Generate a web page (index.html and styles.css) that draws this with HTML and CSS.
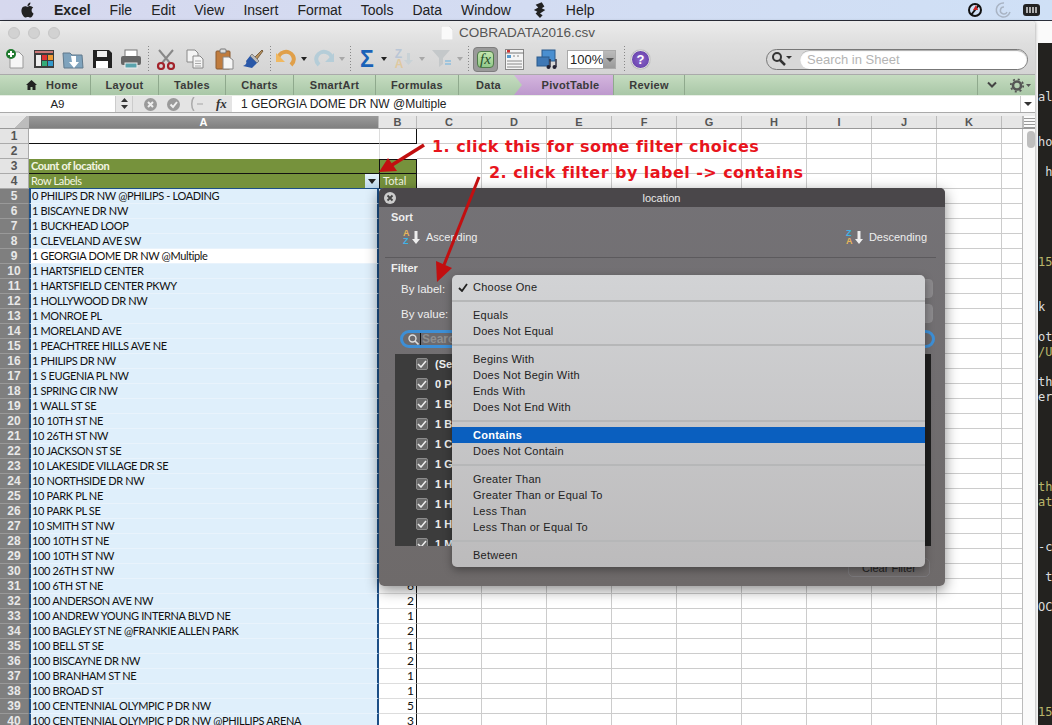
FILE: index.html
```html
<!DOCTYPE html>
<html>
<head>
	<meta charset="utf-8"/>
	<title>COBRADATA2016.csv</title>
	<link rel="stylesheet" href="styles.css">
</head>
<body>
	<div class="menubar">
		<svg class="apple" viewBox="0 0 24 24"><path d="M12.152 6.896c-.948 0-2.415-1.078-3.96-1.04-2.04.027-3.91 1.183-4.961 3.014-2.117 3.675-.546 9.103 1.519 12.09 1.013 1.454 2.208 3.09 3.792 3.039 1.52-.065 2.09-.987 3.935-.987 1.831 0 2.35.987 3.96.948 1.637-.026 2.676-1.48 3.676-2.948 1.156-1.688 1.636-3.325 1.662-3.415-.039-.013-3.182-1.221-3.22-4.857-.026-3.04 2.48-4.494 2.597-4.559-1.429-2.09-3.623-2.324-4.39-2.376-2-.156-3.675 1.09-4.61 1.09zM15.53 3.83c.843-1.012 1.4-2.427 1.245-3.83-1.207.052-2.662.805-3.532 1.818-.78.896-1.454 2.338-1.273 3.714 1.338.104 2.715-.688 3.559-1.701"/></svg>
		<b>Excel</b><span>File</span><span>Edit</span><span>View</span><span>Insert</span><span>Format</span><span>Tools</span><span>Data</span><span>Window</span>
		<svg class="scripts" viewBox="0 0 16 18"><path d="M10 0 3 3l3 3-5 3 4 2-2 2 5 5 3-3-3-2 6-4-4-2 3-2z" fill="#222"/></svg>
		<span>Help</span>
		<div class="status">
			<svg width="16" height="16" viewBox="0 0 16 16"><circle cx="8" cy="8" r="6" fill="none" stroke="#111" stroke-width="2"/><path d="M4 13 12 3" stroke="#111" stroke-width="2"/><path d="M9 3 11 8 6 8z" fill="#c22"/></svg>
			<svg width="18" height="18" viewBox="0 0 18 18" fill="none" stroke="#a9b4c4" stroke-width="1.5"><path d="M10 2a7 7 0 1 0 6 9"/><path d="M10 6a3.5 3.5 0 1 0 3 5"/></svg>
			<svg width="18" height="12" viewBox="0 0 18 12"><rect width="17" height="12" rx="3" fill="#222"/><path d="M4 3v6M7 3v6M10 3v6M13 3v6" stroke="#ddd" stroke-width="1.5"/></svg>
		</div>
	</div>

	<div class="desk">
		<div class="window">
			<div class="titlebar">
				<div class="lights"><i></i><i></i><i></i></div>
				<svg width="12" height="14" viewBox="0 0 12 14"><path d="M0 0h8l4 4v10H0z" fill="#fafafa" stroke="#ddd"/></svg>
				<span class="doctitle">COBRADATA2016.csv</span>
			</div>

			<div class="toolbar">
				<div class="slot"><svg width="22" height="22" viewBox="0 0 22 22"><path d="M6 4h9l4 4v12H6z" fill="#f6f6f6" stroke="#999"/><circle cx="7" cy="6" r="5" fill="#1f7a2e"/><path d="M4 6h6M7 3v6" stroke="#fff" stroke-width="2"/></svg></div>
				<div class="slot"><svg width="22" height="22" viewBox="0 0 22 22"><rect x="1" y="2" width="20" height="18" fill="#3c3c3c"/><rect x="2" y="3" width="18" height="2" fill="#c77"/><rect x="9" y="7" width="5" height="5" fill="#d33"/><rect x="15" y="7" width="5" height="5" fill="#e93"/><rect x="9" y="13" width="5" height="5" fill="#3a7"/><rect x="15" y="13" width="5" height="5" fill="#39c"/><rect x="3" y="7" width="5" height="11" fill="#eee"/></svg></div>
				<div class="slot"><svg width="22" height="22" viewBox="0 0 22 22"><path d="M1 5h7l2 2h10l1 13H2z" fill="#7fa3bd" stroke="#60798c"/><path d="M9 8h5v6h3l-5 6-5-6h3z" fill="#fff"/></svg></div>
				<div class="slot"><svg width="22" height="22" viewBox="0 0 22 22"><path d="M2 2h16l3 3v15H2z" fill="#222"/><rect x="6" y="3" width="10" height="6" fill="#eee"/><rect x="5" y="13" width="12" height="7" fill="#fff"/></svg></div>
				<div class="slot"><svg width="22" height="22" viewBox="0 0 22 22"><rect x="5" y="2" width="12" height="7" fill="#fff" stroke="#777"/><rect x="1" y="8" width="20" height="9" rx="2" fill="#666"/><rect x="5" y="15" width="12" height="5" fill="#5aa3ad" stroke="#eee"/></svg></div>
				<i class="sep"></i>
				<div class="slot"><svg width="22" height="22" viewBox="0 0 22 22" fill="none"><path d="M4 2 15 15M18 2 7 15" stroke="#888" stroke-width="2"/><circle cx="6" cy="18" r="3" stroke="#a3232b" stroke-width="2.2"/><circle cx="16" cy="18" r="3" stroke="#a3232b" stroke-width="2.2"/></svg></div>
				<div class="slot"><svg width="22" height="22" viewBox="0 0 22 22" fill="#f4f4f4" stroke="#888"><path d="M3 2h8l3 3v9H3z"/><path d="M9 8h7l3 3v9H9z"/><path d="M11 13h6M11 15.5h6M11 18h6" stroke="#aaa"/></svg></div>
				<div class="slot"><svg width="22" height="22" viewBox="0 0 22 22"><rect x="3" y="3" width="14" height="18" rx="1" fill="#c07c3e" stroke="#8a5a30"/><rect x="7" y="1" width="6" height="4" rx="1" fill="#ddd" stroke="#777"/><path d="M10 9h6l4 3v9H10z" fill="#f6f6f6" stroke="#888"/></svg></div>
				<div class="slot"><svg width="22" height="22" viewBox="0 0 22 22"><path d="M13 9 20 2l1 1-6 8z" fill="#b9935f" stroke="#7a6040"/><path d="M10 6l7 7-2 2-7-7z" fill="#bbb" stroke="#888"/><path d="M8 8l7 7-5 5-9-2c3-1 4-3 3-5z" fill="#2a58a8"/></svg></div>
				<i class="sep"></i>
				<div class="slot-s"><svg width="22" height="20" viewBox="0 0 22 20" fill="none"><path d="M3 11A8 8 0 0 1 18 7c2 4 0 7-2 9" stroke="#e0a04a" stroke-width="4"/><path d="M1 4v9h9z" fill="#f0b860"/></svg></div>
				<div class="drop"></div>
				<div class="slot-s gap-l"><svg width="22" height="20" viewBox="0 0 22 20" fill="none"><path d="M19 11A8 8 0 0 0 4 7c-2 4 0 7 2 9" stroke="#b5cdd8" stroke-width="4"/><path d="M21 4v9h-9z" fill="#b5cdd8"/></svg></div>
				<div class="drop fade"></div>
				<i class="sep"></i>
				<div class="slot-s sigma">Σ</div>
				<div class="drop"></div>
				<div class="slot-s gap-l sortaz">
					<div class="azstack"><span>Z</span><span class="sa">A</span></div>
					<svg width="9" height="12" viewBox="0 0 9 12"><path d="M3 0h3v7h3l-4.500 5L0 7h3z" fill="#c9d2d6"/></svg>
				</div>
				<div class="drop fade"></div>
				<div class="slot-s gap-l"><svg width="22" height="20" viewBox="0 0 22 20"><path d="M1 1h18l-7 8v6l-4 3V9z" fill="#c4c8ca"/><path d="M14 12h6M14 15h6" stroke="#9fc4dc" stroke-width="2"/></svg></div>
				<div class="drop fade"></div>
				<i class="sep"></i>
				<div class="fxbtn"><span>fx</span></div>
				<div class="slot-t"><svg width="19" height="21" viewBox="0 0 19 21"><rect x=".5" y=".5" width="18" height="20" fill="#f5f5f5" stroke="#888"/><path d="M0 4h19" stroke="#777"/><rect x="2" y="1" width="3" height="2.5" fill="#c33"/><rect x="2" y="6" width="4" height="3" fill="#59c"/><path d="M8 7h2M12 7h2M2 12h15M2 15h15M2 18h15" stroke="#888"/></svg></div>
				<div class="slot-m"><svg width="21" height="21" viewBox="0 0 21 21"><rect x="6" y="1" width="13" height="11" fill="#4a8fd0" stroke="#2b5a8c"/><rect x="1" y="8" width="12" height="9" fill="#3f78b5" stroke="#2b5a8c"/><path d="M14 10v8M20 10v8" stroke="#334" stroke-width="1.5"/><circle cx="12.500" cy="18" r="2" fill="#223"/><circle cx="18.500" cy="18" r="2" fill="#223"/></svg></div>
				<div class="zoombox"><span>100%</span><em></em></div>
				<i class="sep sep-z"></i>
				<div class="help">?</div>
				<div class="search">
					<svg width="22" height="16" viewBox="0 0 22 16" fill="none"><circle cx="6" cy="6" r="4" stroke="#333" stroke-width="2"/><path d="M9 9l5 5" stroke="#333" stroke-width="2.500"/><path d="M15 5h6l-3 3z" fill="#333"/></svg>
					<div class="searchfield">Search in Sheet</div>
				</div>
			</div>

			<div class="tabs">
				<div class="tab t-home"><svg width="11" height="10" viewBox="0 0 11 10"><path d="M5.500 0 11 5H9.500v5H6.500V7h-2v3h-3V5H0z" fill="#222"/></svg>Home</div>
				<div class="tab t-layout">Layout</div>
				<div class="tab t-tables">Tables</div>
				<div class="tab t-charts">Charts</div>
				<div class="tab t-smart">SmartArt</div>
				<div class="tab t-formulas">Formulas</div>
				<div class="tab t-data">Data</div>
				<div class="tab t-pivot">PivotTable</div>
				<div class="tab t-review">Review</div>
				<div class="tabrest">
					<i class="tabsep"></i>
					<svg width="12" height="8" viewBox="0 0 12 8" fill="none"><path d="M2 1.500 6 5.500 10 1.500" stroke="#444" stroke-width="2"/></svg>
					<svg width="22" height="15" viewBox="0 0 22 15"><circle cx="8" cy="7.500" r="4" fill="none" stroke="#555" stroke-width="2.600"/><circle cx="8" cy="7.500" r="6.200" fill="none" stroke="#555" stroke-width="1.800" stroke-dasharray="2 2.870"/><path d="M17 6h5l-2.500 3z" fill="#555"/></svg>
				</div>
			</div>

			<div class="formulabar">
				<div class="namebox">A9</div>
				<div class="stepper"><svg width="7" height="11" viewBox="0 0 7 11"><path d="M3.500 0 7 4H0zM3.500 11 0 7h7z" fill="#333"/></svg></div>
				<div class="fbtns">
					<svg width="13" height="13" viewBox="0 0 13 13"><circle cx="6.500" cy="6.500" r="6.500" fill="#9a9a9a"/><path d="M4 4l5 5M9 4l-5 5" stroke="#eee" stroke-width="2"/></svg>
					<svg width="13" height="13" viewBox="0 0 13 13"><circle cx="6.500" cy="6.500" r="6.500" fill="#9a9a9a"/><path d="M3.500 6.500 6 9l4-5" stroke="#eee" stroke-width="2" fill="none"/></svg>
					<svg width="16" height="14" viewBox="0 0 16 14" fill="none"><path d="M4 0C1 3 1 11 4 14" stroke="#aaa" stroke-width="1.500"/><path d="M7 7h6" stroke="#bbb" stroke-width="1.500"/></svg>
					<span class="fxlabel">fx</span>
				</div>
				<div class="forminput">1 GEORGIA DOME DR NW @Multiple</div>
				<div class="formdrop"></div>
			</div>

			<div class="headgap"></div>
			<div class="colhead">
				<div class="corner"></div>
				<div class="ch ch-a">A</div>
				<div class="ch ch-b">B</div>
				<div class="ch">C</div><div class="ch">D</div><div class="ch">E</div><div class="ch">F</div><div class="ch">G</div><div class="ch">H</div><div class="ch">I</div><div class="ch">J</div><div class="ch">K</div>
				<div class="ch ch-l"></div>
				<div class="splitter"></div>
			</div>

			<div class="sheet">
				<div class="rows">
					<div class="row"><span class="rh">1</span><span class="a plain lineb">&nbsp;</span><span class="b plain lineb liner"></span></div>
					<div class="row"><span class="rh">2</span><span class="a plain"></span><span class="b plain"></span></div>
					<div class="row"><span class="rh">3</span><span class="a pv pvb"><b>Count of location</b></span><span class="b pv pvb linet liner"></span></div>
					<div class="row"><span class="rh">4</span><span class="a pv pvlast">Row Labels<i class="fbtn"></i></span><span class="b pv pvl pvlast liner">Total</span></div>
					<div class="row first"><span class="rh sel">5</span><span class="a ac">0 PHILIPS DR NW @PHILIPS - LOADING</span><span class="b"></span></div>
					<div class="row"><span class="rh sel">6</span><span class="a ac">1 BISCAYNE DR NW</span><span class="b"></span></div>
					<div class="row"><span class="rh sel">7</span><span class="a ac">1 BUCKHEAD LOOP</span><span class="b"></span></div>
					<div class="row"><span class="rh sel">8</span><span class="a ac">1 CLEVELAND AVE SW</span><span class="b"></span></div>
					<div class="row"><span class="rh sel">9</span><span class="a ac active">1 GEORGIA DOME DR NW @Multiple</span><span class="b"></span></div>
					<div class="row"><span class="rh sel">10</span><span class="a ac">1 HARTSFIELD CENTER</span><span class="b"></span></div>
					<div class="row"><span class="rh sel">11</span><span class="a ac">1 HARTSFIELD CENTER PKWY</span><span class="b"></span></div>
					<div class="row"><span class="rh sel">12</span><span class="a ac">1 HOLLYWOOD DR NW</span><span class="b"></span></div>
					<div class="row"><span class="rh sel">13</span><span class="a ac">1 MONROE PL</span><span class="b"></span></div>
					<div class="row"><span class="rh sel">14</span><span class="a ac">1 MORELAND AVE</span><span class="b"></span></div>
					<div class="row"><span class="rh sel">15</span><span class="a ac">1 PEACHTREE HILLS AVE NE</span><span class="b"></span></div>
					<div class="row"><span class="rh sel">16</span><span class="a ac">1 PHILIPS DR NW</span><span class="b"></span></div>
					<div class="row"><span class="rh sel">17</span><span class="a ac">1 S EUGENIA PL NW</span><span class="b"></span></div>
					<div class="row"><span class="rh sel">18</span><span class="a ac">1 SPRING CIR NW</span><span class="b"></span></div>
					<div class="row"><span class="rh sel">19</span><span class="a ac">1 WALL ST SE</span><span class="b"></span></div>
					<div class="row"><span class="rh sel">20</span><span class="a ac">10 10TH ST NE</span><span class="b"></span></div>
					<div class="row"><span class="rh sel">21</span><span class="a ac">10 26TH ST NW</span><span class="b"></span></div>
					<div class="row"><span class="rh sel">22</span><span class="a ac">10 JACKSON ST SE</span><span class="b"></span></div>
					<div class="row"><span class="rh sel">23</span><span class="a ac">10 LAKESIDE VILLAGE DR SE</span><span class="b"></span></div>
					<div class="row"><span class="rh sel">24</span><span class="a ac">10 NORTHSIDE DR NW</span><span class="b"></span></div>
					<div class="row"><span class="rh sel">25</span><span class="a ac">10 PARK PL NE</span><span class="b"></span></div>
					<div class="row"><span class="rh sel">26</span><span class="a ac">10 PARK PL SE</span><span class="b"></span></div>
					<div class="row"><span class="rh sel">27</span><span class="a ac">10 SMITH ST NW</span><span class="b"></span></div>
					<div class="row"><span class="rh sel">28</span><span class="a ac">100 10TH ST NE</span><span class="b"></span></div>
					<div class="row"><span class="rh sel">29</span><span class="a ac">100 10TH ST NW</span><span class="b"></span></div>
					<div class="row"><span class="rh sel">30</span><span class="a ac">100 26TH ST NW</span><span class="b"></span></div>
					<div class="row"><span class="rh sel">31</span><span class="a ac">100 6TH ST NE</span><span class="b">6</span></div>
					<div class="row"><span class="rh sel">32</span><span class="a ac">100 ANDERSON AVE NW</span><span class="b">2</span></div>
					<div class="row"><span class="rh sel">33</span><span class="a ac">100 ANDREW YOUNG INTERNA BLVD NE</span><span class="b">1</span></div>
					<div class="row"><span class="rh sel">34</span><span class="a ac">100 BAGLEY ST NE @FRANKIE ALLEN PARK</span><span class="b">2</span></div>
					<div class="row"><span class="rh sel">35</span><span class="a ac">100 BELL ST SE</span><span class="b">1</span></div>
					<div class="row"><span class="rh sel">36</span><span class="a ac">100 BISCAYNE DR NW</span><span class="b">2</span></div>
					<div class="row"><span class="rh sel">37</span><span class="a ac">100 BRANHAM ST NE</span><span class="b">1</span></div>
					<div class="row"><span class="rh sel">38</span><span class="a ac">100 BROAD ST</span><span class="b">1</span></div>
					<div class="row"><span class="rh sel">39</span><span class="a ac">100 CENTENNIAL OLYMPIC P DR NW</span><span class="b">5</span></div>
					<div class="row"><span class="rh sel">40</span><span class="a ac">100 CENTENNIAL OLYMPIC P DR NW @PHILLIPS ARENA</span><span class="b">3</span></div>
				</div>
				<div class="gridrest"></div>
				<div class="vscroll"><div class="thumb"></div></div>
			</div>
		</div>

		<pre class="terminal">al


hou

 h





<em>15</em>


k

ot
<em>/U</em>

th
er





<em>th</em>
<em>at</em>


-c

 t

OC






<em>15</em></pre>

		<div class="dialog">
			<div class="dlg-head">
				<svg class="dlg-close" width="12" height="12" viewBox="0 0 12 12"><circle cx="6" cy="6" r="6" fill="#ccc"/><path d="M3.500 3.500l5 5M8.500 3.500l-5 5" stroke="#444" stroke-width="1.800"/></svg>
				location
			</div>
			<div class="dlg-title dlg-sort">Sort</div>
			<div class="sortrow">
				<div class="sortbtn">
					<span class="azicon"><b class="c-y">A</b><b class="c-b">Z</b></span><svg width="8" height="13" viewBox="0 0 8 13"><path d="M2.500 0h3v8H8l-4 5-4-5h2.500z" fill="#eee"/></svg>
					<span>Ascending</span>
				</div>
				<div class="sortbtn">
					<span class="azicon"><b class="c-b">Z</b><b class="c-y">A</b></span><svg width="8" height="13" viewBox="0 0 8 13"><path d="M2.500 0h3v8H8l-4 5-4-5h2.500z" fill="#eee"/></svg>
					<span>Descending</span>
				</div>
			</div>
			<div class="dlg-title dlg-filter">Filter</div>
			<div class="pickrow"><span>By label:</span><div class="picker"></div></div>
			<div class="pickrow"><span>By value:</span><div class="picker"></div></div>
			<div class="dlg-search">
				<svg width="11" height="11" viewBox="0 0 11 11" fill="none"><circle cx="4.500" cy="4.500" r="3.500" stroke="#ddd" stroke-width="1.400"/><path d="M7 7l3.500 3.500" stroke="#ddd" stroke-width="1.600"/></svg><i class="caret"></i>Search
			</div>
			<div class="checklist">
				<div class="chk"><i><svg width="10" height="8" viewBox="0 0 10 8"><path d="M1 4l3 3 5-6" stroke="#eee" stroke-width="1.500" fill="none"/></svg></i>(Select All)</div>
				<div class="chk"><i><svg width="10" height="8" viewBox="0 0 10 8"><path d="M1 4l3 3 5-6" stroke="#eee" stroke-width="1.500" fill="none"/></svg></i>0 PHILIPS DR NW</div>
				<div class="chk"><i><svg width="10" height="8" viewBox="0 0 10 8"><path d="M1 4l3 3 5-6" stroke="#eee" stroke-width="1.500" fill="none"/></svg></i>1 BISCAYNE DR NW</div>
				<div class="chk"><i><svg width="10" height="8" viewBox="0 0 10 8"><path d="M1 4l3 3 5-6" stroke="#eee" stroke-width="1.500" fill="none"/></svg></i>1 BUCKHEAD LOOP</div>
				<div class="chk"><i><svg width="10" height="8" viewBox="0 0 10 8"><path d="M1 4l3 3 5-6" stroke="#eee" stroke-width="1.500" fill="none"/></svg></i>1 CLEVELAND AVE</div>
				<div class="chk"><i><svg width="10" height="8" viewBox="0 0 10 8"><path d="M1 4l3 3 5-6" stroke="#eee" stroke-width="1.500" fill="none"/></svg></i>1 GEORGIA DOME</div>
				<div class="chk"><i><svg width="10" height="8" viewBox="0 0 10 8"><path d="M1 4l3 3 5-6" stroke="#eee" stroke-width="1.500" fill="none"/></svg></i>1 HARTSFIELD</div>
				<div class="chk"><i><svg width="10" height="8" viewBox="0 0 10 8"><path d="M1 4l3 3 5-6" stroke="#eee" stroke-width="1.500" fill="none"/></svg></i>1 HARTSFIELD</div>
				<div class="chk"><i><svg width="10" height="8" viewBox="0 0 10 8"><path d="M1 4l3 3 5-6" stroke="#eee" stroke-width="1.500" fill="none"/></svg></i>1 HOLLYWOOD</div>
				<div class="chk"><i><svg width="10" height="8" viewBox="0 0 10 8"><path d="M1 4l3 3 5-6" stroke="#eee" stroke-width="1.500" fill="none"/></svg></i>1 MONROE PL</div>
			</div>
			<div class="clearrow"><div class="clearbtn">Clear Filter</div></div>

			<div class="popup">
				<div class="item"><svg class="tick" width="10" height="9" viewBox="0 0 10 9"><path d="M1 5l3 3 5-7" stroke="#222" stroke-width="1.800" fill="none"/></svg>Choose One</div>
				<hr>
				<div class="item">Equals</div>
				<div class="item">Does Not Equal</div>
				<hr>
				<div class="item">Begins With</div>
				<div class="item">Does Not Begin With</div>
				<div class="item">Ends With</div>
				<div class="item">Does Not End With</div>
				<hr>
				<div class="item on">Contains</div>
				<div class="item">Does Not Contain</div>
				<hr>
				<div class="item">Greater Than</div>
				<div class="item">Greater Than or Equal To</div>
				<div class="item">Less Than</div>
				<div class="item">Less Than or Equal To</div>
				<hr>
				<div class="item">Between</div>
			</div>
		</div>

		<div class="note note1">1. click this for some filter choices</div>
		<div class="note note2">2. click filter by label -&gt; contains</div>
		<svg class="arrows" width="1052" height="725" viewBox="0 0 1052 725">
			<path d="M424 145 392 165" stroke="#c20f10" stroke-width="3.500"/>
			<path d="M379 172 388 158 397 171z" fill="#c20f10"/>
			<path d="M479 177 444 265" stroke="#c20f10" stroke-width="3"/>
			<path d="M437 282 436 261 452 268z" fill="#c20f10"/>
		</svg>
	</div>
</body>
</html>
```

FILE: styles.css
```css
* {
	box-sizing: border-box;
}
html, body {
	margin: 0;
	height: 100%;
}
body {
	width: 1052px;
	height: 725px;
	overflow: hidden;
	position: relative;
	background-color: #fafafa;
	font-family: "Liberation Sans", Arial, sans-serif;
	display: flex;
	flex-direction: column;
}

/* mac menu bar */
.menubar {
	height: 21px;
	flex: none;
	display: flex;
	align-items: center;
	gap: 19px;
	padding: 0 11px 1px 20px;
	font-size: 14px;
	color: #222;
	background: linear-gradient(90deg, #d6d8ee, #d3dcf2 50%, #cfe0f6);
	border-bottom: 1px solid #2b2f3a;
}
.apple {
	width: 15px;
	height: 16px;
	fill: #222;
}
.scripts {
	width: 14px;
	height: 16px;
	margin-left: 3px;
}
.status {
	margin-left: auto;
	display: flex;
	align-items: center;
	gap: 11px;
}

.desk {
	flex: 1;
	display: flex;
	min-height: 0;
}
.window {
	width: 1035px;
	flex: none;
	display: flex;
	flex-direction: column;
	background-color: #fff;
	box-shadow: 1px 0 3px rgba(0, 0, 0, 0.25);
	border-top-left-radius: 4px;
	border-top-right-radius: 4px;
	overflow: hidden;
}
.terminal {
	flex: 1;
	margin: 22px 0 0 3px;
	padding: 47px 0 0 0;
	overflow: hidden;
	background-color: #23221f;
	color: #ddd;
	font-family: "DejaVu Sans Mono", "Liberation Mono", monospace;
	font-size: 12px;
	line-height: 15px;
}
.terminal em {
	font-style: normal;
	color: #b9b56a;
}

.titlebar {
	height: 23px;
	flex: none;
	display: flex;
	align-items: center;
	padding-left: 8px;
	background: linear-gradient(#ececec, #dedede);
}
.lights {
	display: flex;
	gap: 8px;
	width: 433px;
}
.lights i {
	width: 12px;
	height: 12px;
	border-radius: 50%;
	background-color: #d2d2d2;
	border: 1px solid #c6c6c6;
}
.doctitle {
	margin-left: 6px;
	font-size: 13.5px;
	color: #555;
}

.toolbar {
	height: 30px;
	flex: none;
	display: flex;
	align-items: center;
	background: linear-gradient(#dedede, #d4d4d4);
}
.slot {
	width: 29px;
	display: flex;
	justify-content: center;
}
.slot-s {
	width: 26px;
	height: 22px;
	display: flex;
	justify-content: center;
	align-items: center;
}
.gap-l {
	margin-left: 2px;
}
.drop {
	width: 10px;
	height: 4px;
	position: relative;
}
.drop::after {
	content: "";
	display: block;
	width: 0;
	margin: 0 auto;
	border: 3px solid transparent;
	border-top: 4px solid #222;
	border-bottom: 0;
}
.drop.fade::after {
	border-top-color: #a8a8a8;
}
.sep {
	width: 6px;
	height: 26px;
	flex: none;
	background: repeating-linear-gradient(#888 0 1px, transparent 1px 3px) center / 1px 100% no-repeat;
}
.sigma {
	font-size: 23px;
	font-weight: bold;
	color: #1a62b8;
	line-height: 22px;
	padding-left: 2px;
}
.sortaz {
	gap: 1px;
}
.azstack {
	display: flex;
	flex-direction: column;
	font-size: 12px;
	font-weight: bold;
	line-height: 10px;
	color: #b9c6d6;
}
.sortaz .sa {
	color: #e0c9a0;
}
.fxbtn {
	width: 25px;
	height: 25px;
	margin-left: 2px;
	padding: 3px;
	border-radius: 4px;
	background-color: #9a9a9a;
	border: 1px solid #7e7e7e;
}
.fxbtn span {
	display: block;
	height: 17px;
	border-radius: 4px;
	background: linear-gradient(#c4e6ae, #93c98a);
	border: 1px solid #4f7a4a;
	font-family: "Liberation Serif", serif;
	font-style: italic;
	font-size: 15px;
	line-height: 14px;
	text-align: center;
	color: #264d2a;
}
.slot-t {
	margin-left: 7px;
	height: 21px;
}
.slot-m {
	margin-left: 12px;
	height: 21px;
}
.zoombox {
	margin-left: 10px;
	width: 49px;
	height: 19px;
	display: flex;
	background-color: #fff;
	border: 1px solid #aaa;
	font-size: 13px;
	line-height: 17px;
	padding-left: 2px;
	color: #222;
}
.zoombox span {
	flex: 1;
}
.zoombox em {
	width: 14px;
	background: linear-gradient(#bbb, #999);
	position: relative;
}
.zoombox em::after {
	content: "";
	position: absolute;
	left: 3px;
	top: 7px;
	border: 4px solid transparent;
	border-top: 4px solid #555;
	border-bottom: 0;
}
.sep-z {
	margin-left: 5px;
}
.help {
	margin-left: 4px;
	width: 19px;
	height: 19px;
	border-radius: 50%;
	background: radial-gradient(#8a63c9, #5f3ba5);
	border: 1px solid #ddd;
	box-shadow: 0 0 1px #444;
	color: #fff;
	font-size: 13px;
	font-weight: bold;
	line-height: 17px;
	text-align: center;
}
.search {
	margin-left: 116px;
	width: 262px;
	height: 21px;
	display: flex;
	align-items: center;
	padding-left: 4px;
	border: 1px solid #777;
	border-radius: 11px;
	background-color: #d8d8d8;
}
.searchfield {
	margin-left: 7px;
	flex: 1;
	height: 19px;
	padding-left: 7px;
	border-radius: 10px;
	background-color: #fff;
	font-size: 13px;
	line-height: 19px;
	color: #b4b4b4;
	box-shadow: inset 0 1px 1px #aaa;
}

/* ribbon tabs */
.tabs {
	height: 22px;
	flex: none;
	display: flex;
	font-size: 11px;
	font-weight: bold;
	letter-spacing: 0.3px;
	color: #3a3a3a;
	background: linear-gradient(#c5dcc0, #a9c7a7);
	border-top: 1px solid #aaa;
	border-bottom: 1px solid #e8efe6;
}
.tab {
	display: flex;
	align-items: center;
	justify-content: center;
	gap: 9px;
	border-right: 1px solid #8fa98d;
}
.t-home { width: 91px; padding-left: 14px; }
.t-layout { width: 68px; }
.t-tables { width: 67px; }
.t-charts { width: 68px; }
.t-smart { width: 82px; }
.t-formulas { width: 83px; }
.t-data { width: 55px; border-right: 0; padding-left: 4px; }
.t-pivot {
	width: 100px;
	padding-left: 14px;
	background: linear-gradient(#d4b5de, #bd99cd);
	border-right: 1px solid #8fa98d;
	clip-path: polygon(0 0, 100% 0, 100% 100%, 0 100%, 8px 50%);
}
.t-review { width: 71px; }
.tabrest {
	flex: 1;
	display: flex;
	align-items: center;
	justify-content: flex-end;
	gap: 11px;
	padding-right: 4px;
}
.tabsep {
	width: 1px;
	height: 100%;
	margin-right: -3px;
	background-color: #8fa98d;
}

/* formula bar */
.formulabar {
	height: 17px;
	flex: none;
	display: flex;
	background-color: #fff;
	border-bottom: 1px solid #aaa;
	font-size: 11.5px;
	color: #222;
}
.namebox {
	width: 115px;
	text-align: center;
	line-height: 16px;
}
.stepper {
	width: 17px;
	padding: 2px 0 0 5px;
	background-color: #e6e6e6;
	border-left: 1px solid #ccc;
}
.fbtns {
	width: 100px;
	display: flex;
	align-items: center;
	gap: 10px;
	padding-left: 11px;
	background-color: #e4e4e4;
	border-left: 1px solid #ccc;
}
.fxlabel {
	font-family: "Liberation Serif", serif;
	font-style: italic;
	font-weight: bold;
	font-size: 13px;
	color: #333;
}
.forminput {
	flex: 1;
	padding-left: 9px;
	line-height: 16px;
	font-size: 12px;
}
.formdrop {
	width: 15px;
	border-left: 1px solid #ccc;
	position: relative;
}
.formdrop::after {
	content: "";
	position: absolute;
	left: 3px;
	top: 6px;
	border: 4px solid transparent;
	border-top: 4px solid #333;
	border-bottom: 0;
}
.headgap {
	height: 3px;
	flex: none;
	background-color: #eee;
}

/* sheet */
.colhead {
	height: 13px;
	flex: none;
	display: flex;
	font-size: 11px;
	line-height: 12px;
	font-weight: bold;
	color: #555;
	background-color: #e6e6e6;
	border-bottom: 1px solid #999;
}
.corner {
	width: 29px;
	background: linear-gradient(135deg, #e6e6e6 66%, #bcbcbc 66%);
	border-right: 1px solid #bbb;
}
.ch {
	width: 65px;
	text-align: center;
	border-right: 1px solid #bbb;
}
.ch-a {
	width: 350px;
	background: linear-gradient(#9a9a9a, #808080);
	color: #fff;
}
.ch-b {
	width: 38px;
}
.ch-l {
	width: 21px;
}
.splitter {
	flex: 1;
	background: repeating-linear-gradient(#fafafa 0 2px, #999 2px 3px);
	border-left: 1px solid #bbb;
}
.sheet {
	flex: 1;
	min-height: 0;
	display: flex;
	overflow: hidden;
}
.rows {
	width: 417px;
	flex: none;
}
.row {
	display: flex;
	height: 15px;
	font-family: Lato, "Open Sans", sans-serif;
	font-size: 11px;
	letter-spacing: -0.36px;
	line-height: 14px;
	color: #111;
}
.rh {
	width: 29px;
	flex: none;
	text-align: center;
	font-family: "Liberation Sans", sans-serif;
	font-size: 12px;
	font-weight: bold;
	letter-spacing: 0;
	color: #555;
	background-color: #e4e4e4;
	border-bottom: 1px solid #aaa;
	border-right: 1px solid #aaa;
}
.rh.sel {
	background-color: #7f7f7f;
	color: #e8e8e8;
	border-bottom-color: #999;
	border-right-color: #777;
}
.a {
	width: 350px;
	flex: none;
	padding-left: 2px;
	position: relative;
}
.b {
	width: 38px;
	flex: none;
	text-align: right;
	padding-right: 2px;
	font-size: 12px;
	letter-spacing: 0;
	border-right: 1px solid #111;
	border-bottom: 1px solid #ddd;
}
.plain {
	background-color: #fff;
}
.b.plain {
	border-left: 1px solid #ddd;
	border-right: 0;
	border-bottom: 0;
}
.a.lineb, .b.lineb {
	border-bottom: 1px solid #111;
}
.b.liner {
	border-right: 1px solid #111;
}
.pv {
	background-color: #76923c;
	color: #f4f6e4;
	border-right: 0;
}
.a.pvb, .b.pvb {
	border-bottom: 1px solid #111;
}
.b.linet {
	border-top: 1px solid #111;
	border-left: 1px solid #111;
}
.pvl {
	text-align: left;
	padding-left: 3px;
	font-size: 11px;
	border-left: 1px solid #111;
	border-bottom: 0;
}
.pvlast {
	border-bottom: 1px solid #1d4f86;
}
.fbtn {
	position: absolute;
	right: 0;
	top: 0;
	width: 14px;
	height: 14px;
	background: linear-gradient(#e6f2fa, #bcd8ec);
}
.fbtn::after {
	content: "";
	position: absolute;
	left: 3px;
	top: 5px;
	border: 4px solid transparent;
	border-top: 5px solid #222;
	border-bottom: 0;
}
.ac {
	background-color: #dfeffb;
	border-left: 2px solid #1d4f86;
	border-right: 2px solid #1d4f86;
	border-bottom: 1px solid #e9f3fc;
	padding-left: 1px;
}
.active {
	background-color: #fff;
}
.gridrest {
	width: 606px;
	flex: none;
	background-color: #fff;
	background-image: repeating-linear-gradient(90deg, transparent 0 64px, #ccc 64px 65px), repeating-linear-gradient(180deg, transparent 0 14px, #ccc 14px 15px);
	border-right: 1px solid #bbb;
}
.vscroll {
	flex: 1;
	background-color: #fafafa;
	padding: 2px 0 0 4px;
}
.thumb {
	width: 8px;
	height: 17px;
	border-radius: 4px;
	background-color: #bdbdbd;
}

/* filter dialog, lies over the sheet */
.dialog {
	position: absolute;
	left: 379px;
	top: 188px;
	width: 566px;
	height: 398px;
	border-radius: 5px;
	background: linear-gradient(#747276, #6e6a6a);
	box-shadow: 0 4px 14px rgba(0, 0, 0, 0.45);
	color: #eee;
	font-size: 11px;
}
.dlg-head {
	height: 19px;
	background-color: #4a474a;
	border-radius: 5px 5px 0 0;
	text-align: center;
	line-height: 20px;
	padding-right: 1px;
	color: #e8e8e8;
	position: relative;
}
.dlg-close {
	position: absolute;
	left: 5px;
	top: 4px;
}
.dlg-title {
	padding-left: 12px;
	font-weight: bold;
	line-height: 14px;
}
.dlg-sort {
	margin-top: 3px;
}
.sortrow {
	margin: 5px 9px 0 6px;
	padding: 0 9px 13px 18px;
	height: 29px;
	display: flex;
	justify-content: space-between;
	border-bottom: 1px solid #5c5a5d;
}
.sortbtn {
	display: flex;
	align-items: center;
	gap: 6px;
	height: 16px;
}
.azicon {
	display: flex;
	flex-direction: column;
	font-size: 9px;
	line-height: 8px;
	margin-right: -5px;
	width: 8px;
}
.azicon b {
	display: block;
}
.c-y {
	color: #e9b65a;
}
.c-b {
	color: #3fb3e6;
}
.dlg-filter {
	margin-top: 3px;
}
.pickrow {
	display: flex;
	justify-content: space-between;
	align-items: center;
	height: 19px;
	margin: 4px 12px 0 22px;
	font-size: 11.5px;
}
.pickrow + .pickrow {
	margin-top: 6px;
}
.picker {
	width: 481px;
	height: 19px;
	border-radius: 4px;
	background: linear-gradient(90deg, #6f6d70 95%, #8a888b 98%);
	border: 1px solid #8b8a8c;
}
.dlg-search {
	margin: 7px 10px 0 21px;
	height: 18px;
	display: flex;
	align-items: center;
	padding-left: 5px;
	border-radius: 9px;
	border: 3px solid #3d8fd6;
	background-color: #6c6a6d;
	color: #8f8f8f;
	font-size: 12px;
	font-weight: bold;
}
.caret {
	width: 1px;
	height: 12px;
	margin: 0 1px 0 1px;
	background-color: #111;
}
.checklist {
	margin: 6px 14px 0 16px;
	height: 192px;
	overflow: hidden;
	background-color: #3c3c3c;
	border-right: 6px solid #1f1f1f;
}
.chk {
	height: 20px;
	display: flex;
	align-items: center;
	padding-left: 21px;
	gap: 7px;
	font-weight: bold;
	color: #eee;
}
.chk i {
	width: 12px;
	height: 12px;
	border-radius: 2px;
	background-color: #6a6a6a;
	border: 1px solid #8c8c8c;
	display: flex;
	align-items: center;
	justify-content: center;
}
.clearrow {
	display: flex;
	justify-content: flex-end;
	margin: 12px 15px 0 0;
}
.clearbtn {
	width: 82px;
	height: 19px;
	text-align: center;
	line-height: 19px;
	color: #222;
	border-radius: 5px;
	border: 1px solid #7a787b;
}
.popup {
	position: absolute;
	left: 73px;
	top: 87px;
	width: 473px;
	padding: 4px 0;
	border-radius: 5px;
	background: linear-gradient(#d2d3d5, #bcbbbc);
	box-shadow: 0 3px 8px rgba(0, 0, 0, 0.35);
	color: #222;
	letter-spacing: 0.25px;
}
.item {
	height: 16px;
	line-height: 16px;
	padding-left: 21px;
	position: relative;
}
.item.on {
	background-color: #0a5fbf;
	color: #fff;
	font-weight: bold;
}
.tick {
	position: absolute;
	left: 6px;
	top: 4px;
}
.popup hr {
	margin: 5px 0;
	height: 2px;
	border: 0;
	background-color: #b6b7b8;
}

/* red hand annotations on top of everything */
.note {
	position: absolute;
	font-family: "DejaVu Sans", sans-serif;
	font-weight: bold;
	font-size: 16px;
	letter-spacing: 0.45px;
	line-height: 18px;
	color: #e8141c;
	white-space: nowrap;
}
.note1 {
	left: 432px;
	top: 138px;
}
.note2 {
	left: 489px;
	top: 164px;
}
.arrows {
	position: absolute;
	left: 0;
	top: 0;
	pointer-events: none;
}
```
